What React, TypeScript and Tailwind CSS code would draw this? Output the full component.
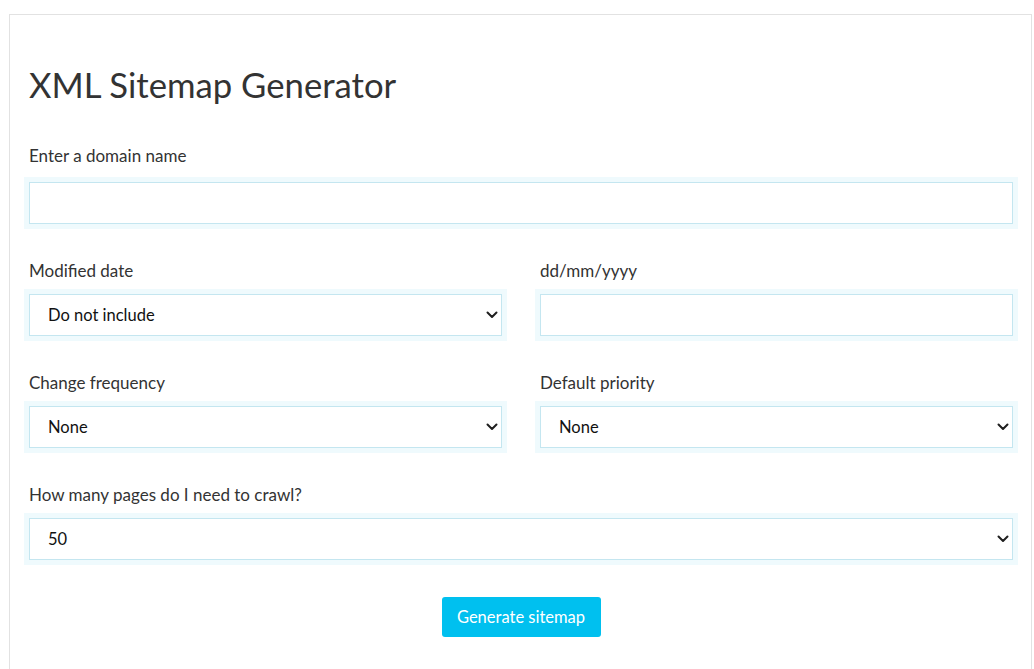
import type { ReactNode } from "react";

const font = { fontFamily: '"Lato", "Noto Sans", sans-serif' };

function Chevron() {
  return (
    <svg
      className="pointer-events-none absolute right-[4px] top-1/2 -translate-y-1/2"
      width="12"
      height="8"
      viewBox="0 0 12 8"
      fill="none"
    >
      <path d="M1.5 1.5 6 6l4.5-4.5" stroke="#1f1f1f" strokeWidth="2" strokeLinecap="round" strokeLinejoin="round" />
    </svg>
  );
}

function Field({ label, first, children }: { label: string; first?: boolean; children: ReactNode }) {
  return (
    <div className="flex flex-col">
      <label
        className={`h-[24px] pl-[5px] text-[17px] leading-[24px] text-[#333] ${first ? "mb-[9px]" : "mb-[6px]"}`}
      >
        {label}
      </label>
      <div className="bg-[#effafd] p-[5px]">{children}</div>
    </div>
  );
}

function Select({ value, options }: { value: string; options: string[] }) {
  return (
    <div className="relative">
      <select
        defaultValue={value}
        className="block h-[42px] w-full appearance-none border border-[#c4e6f0] bg-white pl-[18px] pr-8 text-[16.5px] text-[#111] outline-none"
      >
        {options.map((o) => (
          <option key={o}>{o}</option>
        ))}
      </select>
      <Chevron />
    </div>
  );
}

function TextInput() {
  return (
    <input
      type="text"
      className="block h-[42px] w-full border border-[#c4e6f0] bg-white px-[18px] text-[16.5px] text-[#111] outline-none"
    />
  );
}

export default function App() {
  return (
    <div className="min-h-screen bg-white pl-[9px] pt-[14px]" style={font}>
      <div className="h-[700px] w-[1023px] border border-[#e2e2e2] pb-10 pl-[14px] pr-[13px] pt-[47px]">
        <h1 className="h-[46px] pl-[5px] text-[34.7px] font-normal leading-[46px] text-[#333]">XML Sitemap Generator</h1>

        <div className="mt-[36px] flex flex-col gap-[30px]">
          <Field label="Enter a domain name" first>
            <TextInput />
          </Field>

          <div className="grid grid-cols-2 gap-x-[28px] gap-y-[30px]">
            <Field label="Modified date">
              <Select value="Do not include" options={["Do not include", "Use server response", "Use this date"]} />
            </Field>
            <Field label="dd/mm/yyyy">
              <TextInput />
            </Field>
            <Field label="Change frequency">
              <Select value="None" options={["None", "Always", "Hourly", "Daily", "Weekly", "Monthly", "Yearly", "Never"]} />
            </Field>
            <Field label="Default priority">
              <Select value="None" options={["None", "1.0", "0.9", "0.8", "0.7", "0.6", "0.5"]} />
            </Field>
          </div>

          <Field label="How many pages do I need to crawl?">
            <Select value="50" options={["50", "100", "250", "500"]} />
          </Field>
        </div>

        <div className="mt-[32px] flex justify-center">
          <button
            type="button"
            className="h-[40px] w-[159px] rounded-[3px] bg-[#00c0ef] text-[16.5px] text-white"
          >
            Generate sitemap
          </button>
        </div>
      </div>
    </div>
  );
}
